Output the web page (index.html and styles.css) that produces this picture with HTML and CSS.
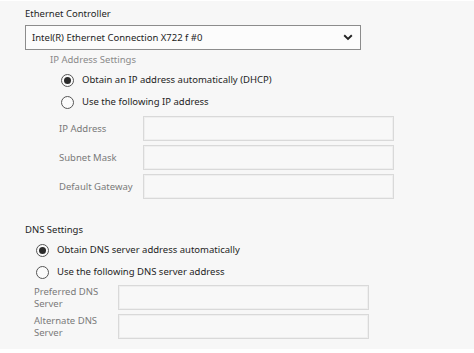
FILE: index.html
```html
<!DOCTYPE html>
<html>
<head>
<meta charset="utf-8">
<link rel="stylesheet" href="styles.css">
</head>
<body>
<div class="panel">
  <div class="title">Ethernet Controller</div>
  <div class="select">
    <span class="select-text">Intel(R) Ethernet Connection X722 f #0</span>
    <svg class="chevron" width="10" height="7" viewBox="0 0 10 7"><path d="M1.2 1.3 L5 5 L8.8 1.3" fill="none" stroke="#222" stroke-width="1.9"/></svg>
  </div>

  <div class="section ip">
    <div class="section-title">IP Address Settings</div>
    <div class="radio-row"><span class="radio checked"></span><span class="radio-label">Obtain an IP address automatically (DHCP)</span></div>
    <div class="radio-row"><span class="radio"></span><span class="radio-label">Use the following IP address</span></div>
    <div class="fields">
      <div class="field"><span class="field-label">IP Address</span><span class="input"></span></div>
      <div class="field"><span class="field-label">Subnet Mask</span><span class="input"></span></div>
      <div class="field"><span class="field-label">Default Gateway</span><span class="input"></span></div>
    </div>
  </div>

  <div class="section dns">
    <div class="dns-title">DNS Settings</div>
    <div class="radio-row"><span class="radio checked"></span><span class="radio-label">Obtain DNS server address automatically</span></div>
    <div class="radio-row"><span class="radio"></span><span class="radio-label">Use the following DNS server address</span></div>
    <div class="fields dns-fields">
      <div class="field"><span class="field-label two">Preferred DNS<br>Server</span><span class="input"></span></div>
      <div class="field"><span class="field-label two">Alternate DNS<br>Server</span><span class="input"></span></div>
    </div>
  </div>
</div>
</body>
</html>
```

FILE: styles.css
```css
html, body {
  margin: 0;
  padding: 0;
  background: #ffffff;
}
body {
  font-family: "Noto Sans", "Open Sans", sans-serif;
  font-size: 9.5px;
  color: #1e1e1e;
  width: 474px;
  height: 353px;
  overflow: hidden;
}
.panel {
  margin-top: 1px;
  height: 348px;
  box-sizing: border-box;
  background: #f7f7f7;
  padding: 6px 0 0 25px;
}
.title {
  height: 14px;
  line-height: 14px;
}
.select {
  margin-top: 4px;
  width: 336px;
  height: 25px;
  box-sizing: border-box;
  border: 1px solid #8c8c8c;
  background: #fcfcfc;
  display: flex;
  align-items: center;
  justify-content: space-between;
  padding: 0 7px 0 6px;
}
.select-text {
  line-height: 14px;
}
.chevron {
  display: block;
}
.section.ip {
  margin-left: 25px;
  margin-top: 3px;
}
.section-title {
  height: 14px;
  line-height: 14px;
  color: #8a8a8a;
}
.radio-row {
  height: 22px;
  display: flex;
  align-items: center;
  padding-left: 11px;
}
.section-title + .radio-row,
.dns-title + .radio-row {
  margin-top: 2px;
}
.radio {
  width: 13px;
  height: 13px;
  box-sizing: border-box;
  border: 1.3px solid #555;
  border-radius: 50%;
  background: #fbfbfb;
  display: flex;
  align-items: center;
  justify-content: center;
  flex: none;
}
.radio.checked::after {
  content: "";
  width: 7px;
  height: 7px;
  border-radius: 50%;
  background: #2b2b2b;
}
.radio-label {
  margin-left: 8px;
  line-height: 14px;
}
.fields {
  margin-top: 3px;
  padding-left: 9px;
  display: flex;
  flex-direction: column;
  gap: 4px;
}
.field {
  display: flex;
  align-items: center;
  height: 25px;
}
.field-label {
  width: 84px;
  flex: none;
  color: #7a7a7a;
  line-height: 14px;
}
.field-label.two {
  line-height: 12px;
}
.input {
  width: 251px;
  height: 25px;
  box-sizing: border-box;
  border: 1px solid #d9d9d9;
  box-shadow: inset 0 0 0 1px #efefef;
  background: #f8f8f8;
}
.section.dns {
  margin-top: 24px;
}
.dns-title {
  height: 14px;
  line-height: 14px;
}
.dns-fields {
  margin-top: 2px;
}
```
